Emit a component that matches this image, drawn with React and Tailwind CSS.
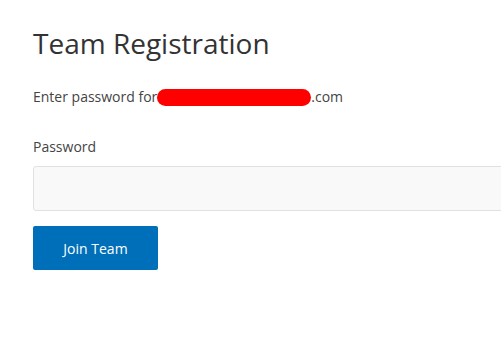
export default function App() {
  return (
    <div className="min-h-screen w-[501px] overflow-hidden bg-white text-[#333] pl-[33px] pt-[24px]" style={{ fontFamily: '"Open Sans", "Noto Sans", sans-serif' }}>
      <h1 className="text-[28px] leading-[38px] font-normal">Team Registration</h1>
      <p className="mt-[25px] text-[14px] leading-[20px] text-[#444] flex items-center">
        Enter password for
        <span className="inline-block w-[154px] h-[17px] rounded-full bg-[#ff0000]" />
        .com
      </p>
      <label className="block mt-[30px] text-[14px] leading-[20px] text-[#444]">Password</label>
      <input
        type="password"
        className="block mt-[9px] w-[472px] h-[45px] bg-[#f9f9f9] border border-[#e1e1e1] rounded-[3px] outline-none px-3"
      />
      <button className="mt-[15px] w-[125px] h-[44px] bg-[#006fb9] text-white text-[14px] rounded-[2px]">
        Join Team
      </button>
    </div>
  );
}
